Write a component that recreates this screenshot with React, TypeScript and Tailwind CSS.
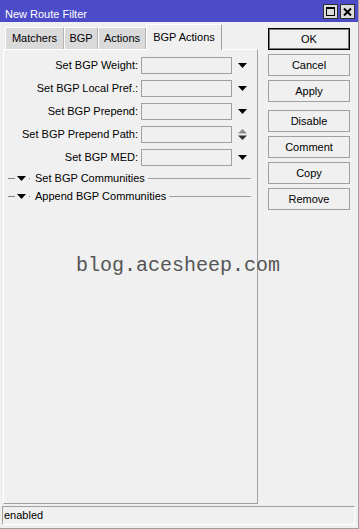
import React from "react";

const rows = [
  { label: "Set BGP Weight:", kind: "drop" },
  { label: "Set BGP Local Pref.:", kind: "drop" },
  { label: "Set BGP Prepend:", kind: "drop" },
  { label: "Set BGP Prepend Path:", kind: "spin" },
  { label: "Set BGP MED:", kind: "drop" },
];

const tabs = [
  { name: "Matchers", w: "w-[59px]" },
  { name: "BGP", w: "w-[34px]" },
  { name: "Actions", w: "w-[48px]" },
];

function DownArrow() {
  return (
    <svg width="9" height="5" viewBox="0 0 9 5">
      <polygon points="0,0 9,0 4.5,5" fill="#000" />
    </svg>
  );
}

function Spinner() {
  return (
    <svg width="9" height="12" viewBox="0 0 9 12">
      <polygon points="4.5,0 9,4.5 0,4.5" fill="#8c8c8c" />
      <polygon points="0,6.5 9,6.5 4.5,11" fill="#303030" />
    </svg>
  );
}

function Section({ title }: { title: string }) {
  return (
    <div className="flex h-[18px] items-center">
      <div className="ml-[4px] h-px w-[7px] bg-[#808080]" />
      <div className="ml-[2px] flex">
        <DownArrow />
      </div>
      <div className="ml-[3px] h-px w-px bg-[#808080]" />
      <span className="ml-[5px] leading-[14px]">{title}</span>
      <div className="ml-[3px] mr-[6px] h-px flex-1 bg-[#a0a0a0]" />
    </div>
  );
}

function Btn({
  label,
  primary,
  className = "",
}: {
  label: string;
  primary?: boolean;
  className?: string;
}) {
  return (
    <button
      className={
        "h-[22px] w-[82px] bg-[#f0f0f0] text-[11px] text-black " +
        (primary
          ? "border border-black shadow-[inset_0_0_0_1px_#7a7a7a] "
          : "border border-[#a0a0a0] ") +
        className
      }
    >
      {label}
    </button>
  );
}

export default function App() {
  return (
    <div className="relative flex h-[529px] w-[359px] flex-col border-b border-r border-[#a0a0a0] bg-[#f0f0f0] font-['Liberation_Sans',Arial,sans-serif] text-[11px] text-black">
      {/* title bar */}
      <div className="flex h-[22px] shrink-0 bg-[#4c4cc9]">
        <span className="pl-[5px] pt-[7px] text-[11px] leading-[14px] text-white">
          New Route Filter
        </span>
        <div className="ml-auto mr-[3px] mt-[4px] flex gap-[2px]">
          <div className="flex h-[15px] w-[15px] items-center justify-center border border-[#303030] bg-[#dcdcdc]">
            <svg width="9" height="9" viewBox="0 0 9 9">
              <rect x="0.5" y="0.5" width="8" height="8" fill="none" stroke="#000" />
              <rect x="0" y="0" width="9" height="2" fill="#000" />
            </svg>
          </div>
          <div className="flex h-[15px] w-[15px] items-center justify-center border border-[#303030] bg-[#dcdcdc]">
            <svg width="9" height="8" viewBox="0 0 9 8">
              <path d="M1 0.5 L8 7.5 M8 0.5 L1 7.5" stroke="#000" strokeWidth="2" />
            </svg>
          </div>
        </div>
      </div>

      {/* body */}
      <div className="flex flex-1">
        <div className="flex w-[258px] flex-col pl-[3px] pt-[2px]">
          <div className="flex h-[25px] items-end pl-[2px]">
            {tabs.map((t) => (
              <div
                key={t.name}
                className={
                  t.w +
                  " flex h-[22px] items-center justify-center border-l border-t border-r border-l-white border-t-white border-r-[#b4b4b4] bg-[#dadada]"
                }
              >
                {t.name}
              </div>
            ))}
            <div className="relative z-10 -mb-px flex h-[26px] w-[76px] items-start justify-center border-l border-t border-r border-l-white border-t-white border-r-[#a0a0a0] bg-[#f0f0f0] pt-[4px]">
              BGP Actions
            </div>
          </div>
          <div className="flex-1 border-b border-l border-r border-t border-b-[#a0a0a0] border-l-white border-r-[#a0a0a0] border-t-white pt-[4px]">
            {rows.map((r) => (
              <div key={r.label} className="flex h-[23px] items-center">
                <div className="w-[134px] text-right">{r.label}</div>
                <div className="ml-[3px] h-[17px] w-[91px] border border-[#a0a0a0] bg-[#f0f0f0]" />
                <div className="ml-[6px] flex">
                  {r.kind === "drop" ? <DownArrow /> : <Spinner />}
                </div>
              </div>
            ))}
            <Section title="Set BGP Communities" />
            <Section title="Append BGP Communities" />
          </div>
        </div>

        <div className="flex flex-col gap-[4px] pl-[10px] pt-[6px]">
          <Btn label="OK" primary />
          <Btn label="Cancel" />
          <Btn label="Apply" />
          <Btn label="Disable" className="mt-[4px]" />
          <Btn label="Comment" />
          <Btn label="Copy" />
          <Btn label="Remove" />
        </div>
      </div>

      {/* status bar */}
      <div className="mb-[3px] ml-[2px] mr-[3px] mt-[2px] flex h-[19px] shrink-0 items-center border-b border-l border-r border-t border-b-white border-l-[#a0a0a0] border-r-white border-t-[#a0a0a0] pl-[1px]">
        enabled
      </div>

      {/* watermark */}
      <div className="absolute left-[76px] top-[256px] font-['Liberation_Mono',monospace] text-[20px] leading-[20px] text-[#555]">
        blog.acesheep.com
      </div>
    </div>
  );
}
